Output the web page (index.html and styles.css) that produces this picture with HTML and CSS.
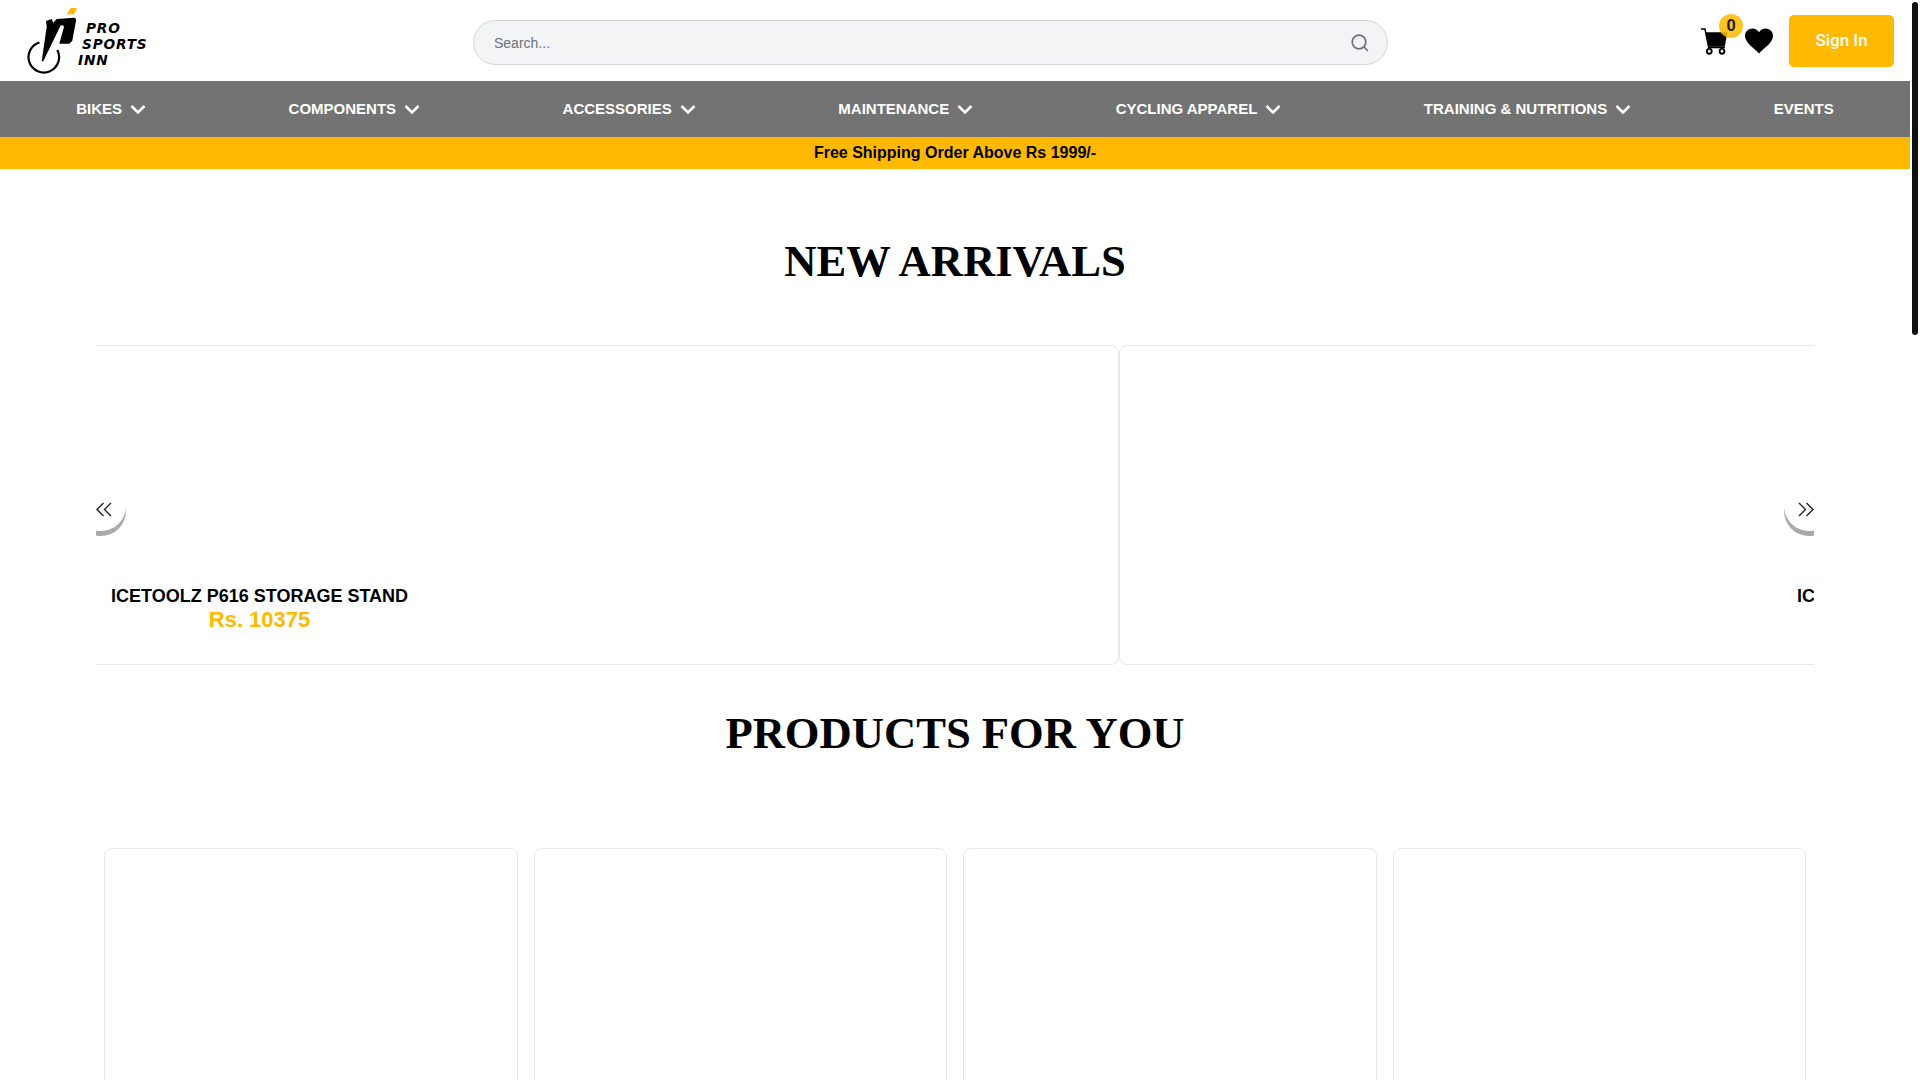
FILE: index.html
```html
<!DOCTYPE html>
<html lang="en">
<head>
<meta charset="utf-8">
<title>Pro Sports Inn</title>
<link rel="stylesheet" href="styles.css">
</head>
<body>
<header class="topbar">
  <a class="logo" href="#">
    <svg class="logo-mark" viewBox="27 8 53 68" width="53" height="68" aria-hidden="true">
      <path d="M66.700 14.300L70.700 8H77L74 14.300Z" fill="#ffb900"/>
      <path d="M46 21L51.700 19L53.300 22.700L56.700 19L74 17.700Q76.500 18 76 20.700L72.300 40.700L69.300 43.700L59.300 43.700L64 26.700Q63 25 61.700 25.300Q60.500 25.500 60 26.700L43.300 61.300L41.700 61.300L46.700 26.700Z" fill="#000"/>
      <path d="M39.500 42.500A15.300 15.300 0 1 0 57.300 50" fill="none" stroke="#000" stroke-width="2.200"/>
    </svg>
    <span class="logo-text"><span class="logo-l1">PRO</span><span class="logo-l2">SPORTS</span><span class="logo-l3">INN</span></span>
  </a>
  <form class="search">
    <input class="search-input" type="text" placeholder="Search...">
    <svg class="search-icon" viewBox="0 0 20 20" width="20" height="20" aria-hidden="true">
      <circle cx="9" cy="9" r="6.800" fill="none" stroke="#6b7280" stroke-width="1.700"/>
      <path d="M14 14L17.500 17.500" stroke="#6b7280" stroke-width="1.700" stroke-linecap="round"/>
    </svg>
  </form>
  <div class="actions">
    <a class="cart" href="#">
      <svg viewBox="0 0 28 28" width="28" height="28" aria-hidden="true">
        <path d="M0 1H4L7.700 19.500H24" fill="none" stroke="#000" stroke-width="1.500"/>
        <path d="M4.500 4.300H26.500L23.700 18.700H7.700Z" fill="#000"/>
        <circle cx="8.300" cy="23.300" r="2.400" fill="#fff" stroke="#000" stroke-width="1.900"/>
        <circle cx="21" cy="23.300" r="2.400" fill="#fff" stroke="#000" stroke-width="1.900"/>
      </svg>
      <span class="badge">0</span>
    </a>
    <a class="heart" href="#">
      <svg viewBox="0 0 30 27" width="28" height="26" aria-hidden="true">
        <path d="M15 27C11 22 0 16 0 8C0 3 4 0 8 0C11 0 13.500 1.500 15 4C16.500 1.500 19 0 22 0C26 0 30 3 30 8C30 16 19 22 15 27Z" fill="#000"/>
      </svg>
    </a>
    <a class="signin" href="#">Sign In</a>
  </div>
</header>

<nav class="mainnav">
  <a class="nav-item" href="#">BIKES<svg class="chev" viewBox="0 0 16 11" width="16" height="11"><path d="M1.500 2L8 8.500L14.500 2" fill="none" stroke="#fff" stroke-width="2.600"/></svg></a>
  <a class="nav-item" href="#">COMPONENTS<svg class="chev" viewBox="0 0 16 11" width="16" height="11"><path d="M1.500 2L8 8.500L14.500 2" fill="none" stroke="#fff" stroke-width="2.600"/></svg></a>
  <a class="nav-item" href="#">ACCESSORIES<svg class="chev" viewBox="0 0 16 11" width="16" height="11"><path d="M1.500 2L8 8.500L14.500 2" fill="none" stroke="#fff" stroke-width="2.600"/></svg></a>
  <a class="nav-item" href="#">MAINTENANCE<svg class="chev" viewBox="0 0 16 11" width="16" height="11"><path d="M1.500 2L8 8.500L14.500 2" fill="none" stroke="#fff" stroke-width="2.600"/></svg></a>
  <a class="nav-item" href="#">CYCLING APPAREL<svg class="chev" viewBox="0 0 16 11" width="16" height="11"><path d="M1.500 2L8 8.500L14.500 2" fill="none" stroke="#fff" stroke-width="2.600"/></svg></a>
  <a class="nav-item" href="#">TRAINING &amp; NUTRITIONS<svg class="chev" viewBox="0 0 16 11" width="16" height="11"><path d="M1.500 2L8 8.500L14.500 2" fill="none" stroke="#fff" stroke-width="2.600"/></svg></a>
  <a class="nav-item" href="#">EVENTS</a>
</nav>

<div class="promo">Free Shipping Order Above Rs 1999/-</div>

<main>
  <h2 class="section-title arrivals-title">NEW ARRIVALS</h2>
  <section class="carousel">
    <div class="track">
      <article class="slide">
        <div class="slide-info">
          <h3 class="slide-name">ICETOOLZ P616 STORAGE STAND</h3>
          <p class="slide-price">Rs. 10375</p>
        </div>
      </article>
      <article class="slide">
        <div class="slide-info">
          <h3 class="slide-name">ICETOOLZ P616 STORAGE STAND</h3>
          <p class="slide-price">Rs. 10375</p>
        </div>
      </article>
    </div>
    <button class="arrow arrow-prev" type="button" aria-label="Previous">
      <svg viewBox="0 0 16 15" width="16" height="15"><path d="M7.500 1L1 7.500L7.500 14M15 1L8.500 7.500L15 14" fill="none" stroke="#222" stroke-width="1.400"/></svg>
    </button>
    <button class="arrow arrow-next" type="button" aria-label="Next">
      <svg viewBox="0 0 16 15" width="16" height="15"><path d="M1 1L7.500 7.500L1 14M8.500 1L15 7.500L8.500 14" fill="none" stroke="#222" stroke-width="1.400"/></svg>
    </button>
  </section>

  <h2 class="section-title products-title">PRODUCTS FOR YOU</h2>
  <section class="products">
    <article class="product"></article>
    <article class="product"></article>
    <article class="product"></article>
    <article class="product"></article>
  </section>
</main>
<div class="scroll-thumb"></div>
</body>
</html>
```
FILE: styles.css
```css
* { box-sizing: border-box; }
html { scrollbar-width: none; }
body {
  margin: 0 10px 0 0;
  min-height: 3480px;
  background: #fff;
  color: #000;
  font-family: "Liberation Sans", Arial, sans-serif;
}
a { color: inherit; text-decoration: none; }

.scroll-thumb {
  position: fixed;
  top: 2px;
  right: 2px;
  width: 6px;
  height: 333px;
  border-radius: 3px;
  background: #111;
}

.topbar {
  height: 81px;
  display: flex;
  align-items: center;
  padding: 0 16px 0 27px;
}
.logo {
  width: 446px;
  height: 68px;
  flex: none;
  align-self: flex-start;
  margin-top: 8px;
  display: flex;
  align-items: flex-start;
}
.logo-mark { flex: none; }
.logo-text {
  display: flex;
  flex-direction: column;
  margin: 12px 0 0 -2px;
  font-family: "DejaVu Sans", "Liberation Sans", sans-serif;
  font-weight: 700;
  font-style: italic;
  font-size: 13.700px;
  line-height: 16px;
  letter-spacing: 0.800px;
  color: #000;
}
.logo-l1 { margin-left: 8px; }
.logo-l2 { margin-left: 4px; }

.search {
  width: 915px;
  height: 45px;
  flex: none;
  margin-top: 4px;
  display: flex;
  align-items: center;
  padding: 0 17px 0 20px;
  background: #f3f4f6;
  border: 1px solid #d1d5db;
  border-radius: 23px;
}
.search-input {
  flex: 1;
  min-width: 0;
  border: 0;
  outline: 0;
  padding: 0;
  background: transparent;
  font: 14px "Liberation Sans", Arial, sans-serif;
}
.search-input::placeholder { color: #6b7280; opacity: 1; }
.search-icon { flex: none; }

.actions { margin-left: auto; display: flex; align-items: center; }
.cart { position: relative; display: block; width: 28px; height: 28px; margin-top: 3px; }
.cart svg { display: block; }
.badge {
  position: absolute;
  left: 18px;
  top: -14px;
  width: 24px;
  height: 24px;
  border-radius: 50%;
  background: rgba(255, 185, 0, 0.85);
  color: #222;
  font: 700 16px/24px Roboto, sans-serif;
  text-align: center;
}
.heart { display: block; margin-left: 16px; height: 26px; }
.heart svg { display: block; }
.signin {
  margin: 1px 0 0 16px;
  width: 105px;
  height: 52px;
  padding-bottom: 2px;
  display: flex;
  align-items: center;
  justify-content: center;
  background: #ffb900;
  border-radius: 5px;
  color: #fff;
  font: 500 17px Roboto, sans-serif;
}

.mainnav {
  height: 56px;
  padding: 0 5px 2px;
  display: flex;
  align-items: center;
  justify-content: space-around;
  background: #737373;
}
.nav-item {
  display: flex;
  align-items: center;
  color: #fff;
  font-weight: 700;
  font-size: 15px;
}
.chev { margin-left: 8px; margin-top: 2px; }

.promo {
  height: 32px;
  background: #ffb900;
  color: #000;
  font-weight: 700;
  font-size: 16px;
  line-height: 32px;
  text-align: center;
}

.section-title {
  margin: 0;
  text-align: center;
  font-family: "Liberation Serif", "Times New Roman", serif;
  font-weight: 700;
  font-size: 44.600px;
  line-height: 52px;
}
.arrivals-title { padding-top: 66px; }
.products-title { padding-top: 42px; }

.carousel {
  position: relative;
  margin: 58px 96px 0;
  height: 320px;
  overflow: hidden;
}
.track {
  display: flex;
  height: 100%;
  transform: translateX(-663px);
}
.slide {
  flex: none;
  width: 1686px;
  height: 100%;
  border: 1px solid #e5e7eb;
  border-radius: 8px;
  padding: 238px 0 0 677px;
}
.slide-info { display: inline-block; text-align: center; }
.slide-name { margin: 0; font-size: 18px; line-height: 24px; font-weight: 700; }
.slide-price { margin: 0; font-size: 22px; line-height: 24px; font-weight: 700; color: #ffb900; }

.arrow {
  position: absolute;
  top: 136px;
  width: 50px;
  height: 50px;
  padding: 0;
  border: 0;
  border-radius: 50%;
  background: #fff;
  box-shadow: 0 5px 0 #aaa;
}
.arrow svg { position: absolute; top: 21px; }
.arrow-prev { left: -20px; }
.arrow-prev svg { left: 20px; }
.arrow-next { right: -20px; }
.arrow-next svg { right: 20px; }

.products {
  display: grid;
  grid-template-columns: repeat(4, 1fr);
  gap: 16px;
  margin: 89px 104px 0;
}
.product {
  height: 520px;
  background: #fff;
  border: 1px solid #e5e7eb;
  border-radius: 8px;
}
```
